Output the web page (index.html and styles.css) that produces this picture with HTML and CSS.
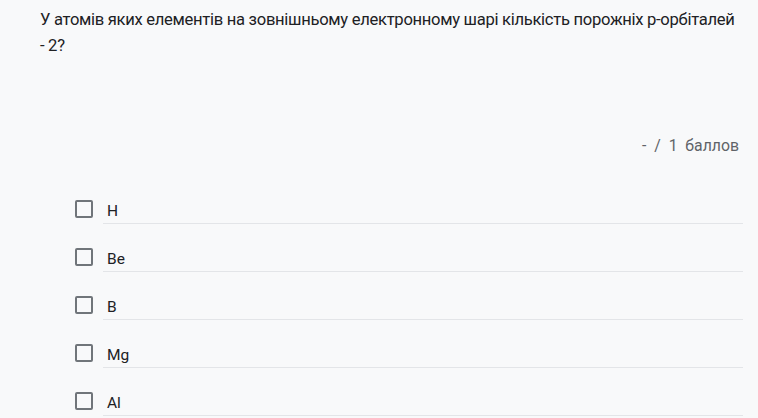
FILE: index.html
```html
<!DOCTYPE html>
<html lang="uk">
<head>
<meta charset="utf-8">
<link rel="stylesheet" href="styles.css">
</head>
<body>
<div class="page">
  <div class="question">У атомів яких елементів на зовнішньому електронному шарі кількість порожніх р-орбіталей<br>- 2?</div>
  <div class="score">-&nbsp; /&nbsp; 1&nbsp; баллов</div>
  <div class="options">
    <div class="option"><span class="box"></span><span class="label">H</span></div>
    <div class="option"><span class="box"></span><span class="label">Be</span></div>
    <div class="option"><span class="box"></span><span class="label">B</span></div>
    <div class="option"><span class="box"></span><span class="label">Mg</span></div>
    <div class="option"><span class="box"></span><span class="label">Al</span></div>
  </div>
</div>
</body>
</html>
```
FILE: styles.css
```css
html, body {
  margin: 0;
  padding: 0;
  background: #f8f9fa;
}
.page {
  font-family: Roboto, "Noto Sans", sans-serif;
  color: #202124;
  padding: 7px 8px 0 40px;
}
.question {
  font-size: 16.6px;
  letter-spacing: -0.3px;
  line-height: 26px;
  color: #202124;
  white-space: nowrap;
}
.score {
  margin-top: 77px;
  text-align: right;
  font-size: 15.8px;
  line-height: 20px;
  color: #5f6368;
  padding-right: 11px;
}
.options {
  margin-top: 29px;
  padding-left: 35px;
}
.option {
  display: flex;
  align-items: center;
  height: 48px;
}
.box {
  width: 14px;
  height: 14px;
  border: 2px solid #70757a;
  border-radius: 2px;
  flex: none;
  margin-right: 10px;
}
.label {
  flex: 1;
  font-size: 15.5px;
  line-height: 24px;
  padding: 0 2px 0 4px;
  margin-right: 7px;
  border-bottom: 1px solid #e3e5e8;
  margin-top: 4px;
  color: #202124;
}
```
